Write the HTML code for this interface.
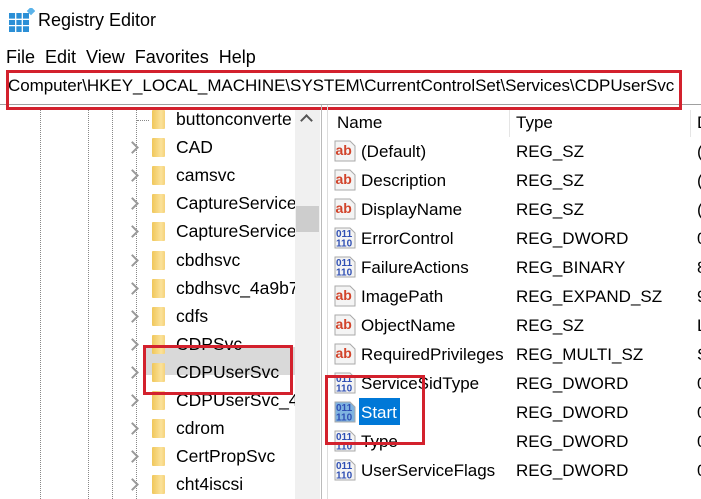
<!DOCTYPE html>
<html><head><style>
*{margin:0;padding:0;box-sizing:border-box}
body{width:701px;height:499px;overflow:hidden;background:#fff;font-family:"Liberation Sans",sans-serif;font-size:17px;color:#000;position:relative}
.a{position:absolute;white-space:nowrap}
.dl{position:absolute;width:0;border-left:1px dotted #888}
.fold{position:absolute;width:13px;height:19px;background:linear-gradient(90deg,#f0c75a,#fbe29a 70%,#f5d27a);border-radius:1px}
.chev{position:absolute;width:9px;height:9px;border-right:2px solid #999;border-top:2px solid #999;transform:rotate(45deg)}
.ico{position:absolute;width:22px;height:22px}
.red{position:absolute;border:3px solid #d3212d}
</style></head><body>
<svg class="a" style="left:9px;top:8px" width="26" height="24" viewBox="0 0 26 24">
<rect x="0" y="5" width="20" height="19" fill="#2b8fd6"/>
<g stroke="#fff" stroke-width="1.3"><line x1="6.7" y1="5" x2="6.7" y2="24"/><line x1="13.3" y1="5" x2="13.3" y2="24"/><line x1="0" y1="11.3" x2="20" y2="11.3"/><line x1="0" y1="17.6" x2="20" y2="17.6"/></g>
<rect x="19" y="0" width="6" height="6" fill="#5bb3ea" transform="rotate(45 22 3)"/>
</svg>
<div class="a" style="left:38px;top:10px;font-size:18px">Registry Editor</div>
<div class="a" style="left:6px;top:47px;font-size:18px">File&nbsp;&nbsp;Edit&nbsp;&nbsp;View&nbsp;&nbsp;Favorites&nbsp;&nbsp;Help</div>
<div class="a" style="left:0;top:104px;width:701px;height:1px;background:#a0a0a0"></div>
<div class="a" style="left:8px;top:76px;font-size:17px;letter-spacing:-0.05px">Computer\HKEY_LOCAL_MACHINE\SYSTEM\CurrentControlSet\Services\CDPUserSvc</div>
<div class="red" style="left:6px;top:70px;width:676px;height:40px"></div>
<div class="dl" style="left:40px;top:110px;height:389px"></div>
<div class="dl" style="left:88px;top:110px;height:389px"></div>
<div class="dl" style="left:112px;top:110px;height:389px"></div>
<div class="dl" style="left:136px;top:110px;height:389px"></div>
<div class="a" style="left:137px;top:120px;width:12px;border-top:1px dotted #888"></div>
<div class="a" style="left:295px;top:110px;width:25px;height:389px;background:#f0f0f0"></div>
<div class="a" style="left:296px;top:206px;width:23px;height:26px;background:#cdcdcd"></div>
<div class="a" style="left:302px;top:116px;width:9px;height:9px;border-left:2px solid #555;border-top:2px solid #555;transform:rotate(45deg)"></div>
<div class="a" style="left:321px;top:105px;width:1px;height:394px;background:#bbb"></div>
<div class="a" style="left:327px;top:105px;width:1px;height:394px;background:#ddd"></div>
<div class="a" style="left:143px;top:347px;width:152px;height:28px;background:#d9d9d9"></div>
<div id="tree"></div>
<div class="a" style="left:337px;top:113px">Name</div>
<div class="a" style="left:516px;top:113px">Type</div>
<div class="a" style="left:697px;top:113px">D</div>
<div class="a" style="left:509px;top:110px;width:1px;height:27px;background:#e5e5e5"></div>
<div class="a" style="left:690px;top:110px;width:1px;height:27px;background:#e5e5e5"></div>
<div id="list"></div>
<div class="a" style="left:359px;top:398px;width:41px;height:27px;background:#0078d7"></div>
<div class="red" style="left:143px;top:345px;width:150px;height:50px"></div>
<div class="red" style="left:325px;top:375px;width:100px;height:70px"></div>
<script>
var t=["buttonconverte","CAD","camsvc","CaptureService","CaptureService_","cbdhsvc","cbdhsvc_4a9b7","cdfs","CDPSvc","CDPUserSvc","CDPUserSvc_4a","cdrom","CertPropSvc","cht4iscsi"];
var h="";
t.forEach(function(s,i){var y=120+i*28.1;
if(i>0)h+='<div class="chev" style="left:128px;top:'+(y-5)+'px"></div>';
h+='<div class="fold" style="left:152px;top:'+(y-10)+'px"></div>';
h+='<div class="a" style="left:176px;top:'+(y-11)+'px;width:119px;overflow:hidden;font-size:17.5px">'+s+'</div>';});
document.getElementById("tree").innerHTML=h;
var L=[["ab","(Default)","REG_SZ","("],["ab","Description","REG_SZ","("],["ab","DisplayName","REG_SZ","("],["b","ErrorControl","REG_DWORD","0"],["b","FailureActions","REG_BINARY","8"],["ab","ImagePath","REG_EXPAND_SZ","9"],["ab","ObjectName","REG_SZ","L"],["ab","RequiredPrivileges","REG_MULTI_SZ","S"],["b","ServiceSidType","REG_DWORD","0"],["b","Start","REG_DWORD","0"],["b","Type","REG_DWORD","0"],["b","UserServiceFlags","REG_DWORD","0"]];
h="";
L.forEach(function(r,i){var y=152+i*29;
if(r[0]=="ab")h+='<svg class="ico" style="left:334px;top:'+(y-12)+'px" viewBox="0 0 22 22"><path d="M1 1h15l5 5v15H1z" fill="#f4f4f4" stroke="#aaa"/><text x="1.5" y="15" font-family="Liberation Sans" font-weight="bold" font-size="14" fill="#d2442b">ab</text></svg>';
else h+='<svg class="ico" style="left:334px;top:'+(y-12)+'px" viewBox="0 0 22 22"><path d="M1 1h15l5 5v15H1z" fill="'+(i==9?'#7fb3e0':'#f4f4f4')+'" stroke="#aaa"/><text x="2" y="10" font-family="Liberation Sans" font-weight="bold" font-size="10" fill="#2f4fb4">011</text><text x="2" y="19.5" font-family="Liberation Sans" font-weight="bold" font-size="10" fill="#2f4fb4">110</text></svg>';
h+='<div class="a" style="left:361px;top:'+(y-10)+'px;'+(i==9?'color:#fff;z-index:2':'')+'">'+r[1]+'</div>';
h+='<div class="a" style="left:516px;top:'+(y-10)+'px">'+r[2]+'</div>';
h+='<div class="a" style="left:697px;top:'+(y-10)+'px">'+r[3]+'</div>';});
document.getElementById("list").innerHTML=h;
</script>
</body></html>
